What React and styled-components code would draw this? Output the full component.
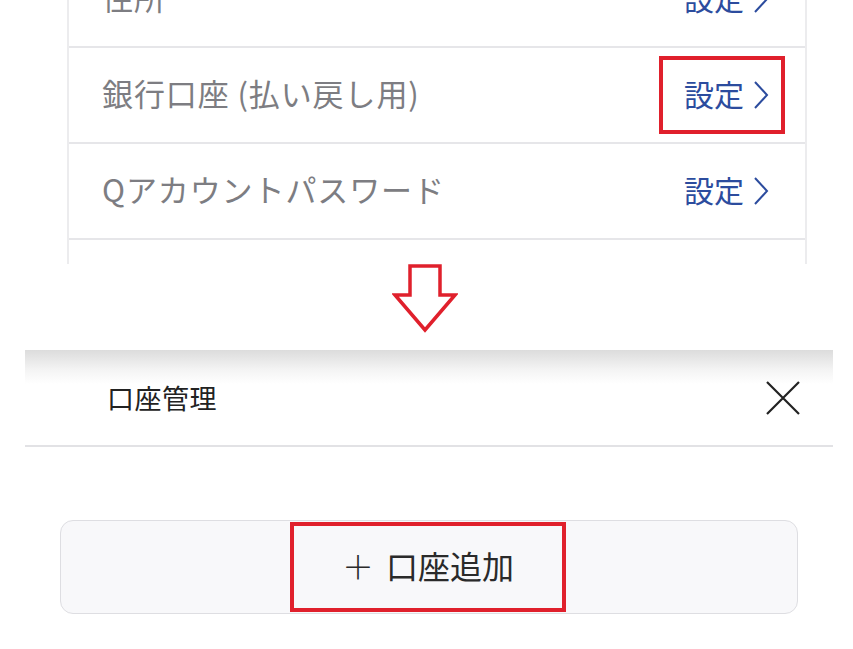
import React from "react";
import styled, { createGlobalStyle } from "styled-components";

const Global = createGlobalStyle`
  html, body { margin: 0; padding: 0; background: #ffffff; }
  body { font-family: "Noto Sans CJK JP", "Noto Sans", sans-serif; }
`;

const Page = styled.div`
  width: 853px;
  height: 649px;
  overflow: hidden;
  display: flex;
  flex-direction: column;
`;

const ListCrop = styled.div`
  height: 264px;
  overflow: hidden;
  padding-left: 67px;
  width: 740px;
`;

const List = styled.div`
  margin-top: -48px;
  border-left: 2px solid #ececee;
  border-right: 2px solid #ececee;
  display: flex;
  flex-direction: column;
`;

const Row = styled.div`
  height: 94px;
  box-sizing: border-box;
  height: 96px;
  border-bottom: 2px solid #e6e6e9;
  display: flex;
  align-items: center;
  justify-content: space-between;
  padding: 0 20px 0 33px;
`;

const Label = styled.span`
  font-size: 31px;
  color: #7d7d82;
  letter-spacing: 0.9px;
  padding-bottom: 6px;
`;

const Action = styled.span`
  display: flex;
  align-items: center;
  gap: 9px;
  padding: 0 12px 0 21px;
  height: 70px;
  border: 4px solid ${(p) => (p.$highlight ? "#e0202c" : "transparent")};
  color: #2c4c9e;
  font-size: 30px;
`;

const ActionText = styled.span`
  padding-bottom: 5px;
`;

const ArrowZone = styled.div`
  height: 86px;
  display: flex;
  justify-content: center;
  align-items: flex-start;
  padding-right: 3px;
`;

const Sheet = styled.div`
  margin: 0 20px 0 25px;
  display: flex;
  flex-direction: column;
`;

const SheetHeader = styled.div`
  height: 95px;
  border-bottom: 2px solid #e2e2e5;
  background: linear-gradient(to bottom, #dcdcdc 0px, #f4f4f4 20px, #ffffff 34px);
  display: flex;
  align-items: center;
  justify-content: space-between;
  padding: 0 32px 0 82px;
`;

const Title = styled.span`
  font-size: 27px;
  color: #222;
  letter-spacing: 0.5px;
`;

const Body = styled.div`
  padding: 73px 35px 0;
`;

const AddButton = styled.div`
  height: 92px;
  border: 1px solid #dedee2;
  border-radius: 13px;
  background: #f8f8fa;
  display: flex;
  align-items: center;
  justify-content: center;
`;

const ButtonLabel = styled.span`
  box-sizing: border-box;
  width: 276px;
  height: 90px;
  border: 4px solid #e0202c;
  display: flex;
  align-items: center;
  justify-content: center;
  gap: 12px;
  font-size: 32px;
  color: #2a2a2a;
  margin-left: -2px;
  padding-bottom: 5px;
`;

const Plus = styled.span`
  font-weight: 300;
  font-size: 32px;
`;

const Chevron = () => (
  <svg width="16" height="30" viewBox="0 0 16 30">
    <polyline points="2,2 14,15 2,28" fill="none" stroke="#2c4c9e" strokeWidth="2" />
  </svg>
);

const rows = [
  { label: "住所" },
  { label: "銀行口座 (払い戻し用)", hl: true },
  { label: "Qアカウントパスワード" },
  { label: "" },
];

export default function App() {
  return (
    <Page>
      <Global />
      <ListCrop>
        <List>
          {rows.map((r, i) => (
            <Row key={i}>
              <Label>{r.label}</Label>
              {r.label && (
                <Action $highlight={r.hl}>
                  <ActionText>設定</ActionText>
                  <Chevron />
                </Action>
              )}
            </Row>
          ))}
        </List>
      </ListCrop>
      <ArrowZone>
        <svg width="66" height="70" viewBox="0 0 66 70">
          <polygon
            points="18,2 48,2 48,31 63,31 33,66 3,31 18,31"
            fill="#fff"
            stroke="#e0202c"
            strokeWidth="3.5"
            strokeLinejoin="miter"
          />
        </svg>
      </ArrowZone>
      <Sheet>
        <SheetHeader>
          <Title>口座管理</Title>
          <svg width="36" height="36" viewBox="0 0 36 36">
            <path d="M2 2 L34 34 M34 2 L2 34" stroke="#222" strokeWidth="2.2" fill="none" />
          </svg>
        </SheetHeader>
        <Body>
          <AddButton>
            <ButtonLabel>
              <Plus>＋</Plus>
              <span>口座追加</span>
            </ButtonLabel>
          </AddButton>
        </Body>
      </Sheet>
    </Page>
  );
}
